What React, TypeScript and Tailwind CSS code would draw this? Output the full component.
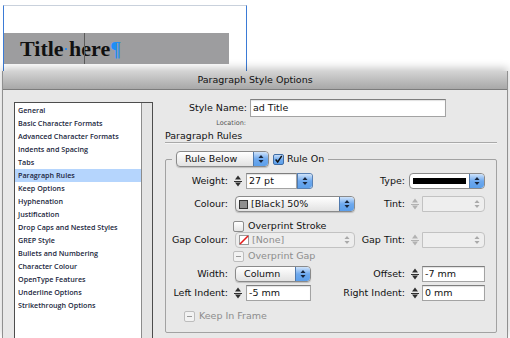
import React from "react";

const sections = [
  "General",
  "Basic Character Formats",
  "Advanced Character Formats",
  "Indents and Spacing",
  "Tabs",
  "Paragraph Rules",
  "Keep Options",
  "Hyphenation",
  "Justification",
  "Drop Caps and Nested Styles",
  "GREP Style",
  "Bullets and Numbering",
  "Character Colour",
  "OpenType Features",
  "Underline Options",
  "Strikethrough Options",
];

function Arrows({ dim }: { dim?: boolean }) {
  const c = dim ? "#a9a9a9" : "#17243a";
  return (
    <svg width="6" height="10" viewBox="0 0 6 10">
      <path d="M3 1 L5.5 4 H0.5 Z" fill={c} />
      <path d="M3 9 L5.5 6 H0.5 Z" fill={c} />
    </svg>
  );
}

function Stepper({ dim }: { dim?: boolean }) {
  const c = dim ? "#b2b2b2" : "#2e2e2e";
  return (
    <svg width="12" height="16" viewBox="0 0 12 16" className="shrink-0">
      <path d="M6 2.5 L9 6.5 H3 Z" fill={c} />
      <path d="M2 8.5 H10" stroke={c} strokeWidth="1" />
      <path d="M6 13.5 L9 9.5 H3 Z" fill={c} />
    </svg>
  );
}

function BlueButton() {
  return (
    <div className="w-[15px] h-full shrink-0 flex items-center justify-center rounded-r-[3px] border-l border-[#4f79ad] bg-gradient-to-b from-[#cfe3fa] via-[#6ea9ee] to-[#5c9fea]">
      <Arrows />
    </div>
  );
}

function PopUp({ className, children }: { className: string; children: React.ReactNode }) {
  return (
    <div
      className={`h-[16px] flex items-center rounded-[4px] border border-[#8a8a8a] bg-gradient-to-b from-white to-[#e2e2e2] shadow-[0_1px_1px_rgba(0,0,0,0.18)] overflow-hidden ${className}`}
    >
      <div className="flex-1 flex items-center pl-[8px] text-[9.5px] text-[#111] whitespace-nowrap">{children}</div>
      <BlueButton />
    </div>
  );
}

function DimPopUp({ className, children }: { className: string; children?: React.ReactNode }) {
  return (
    <div
      className={`h-[16px] flex items-center rounded-[4px] border border-[#c2c2c2] bg-[#ededed] overflow-hidden ${className}`}
    >
      <div className="flex-1 flex items-center pl-[8px] text-[9.5px] text-[#8d8d8d] whitespace-nowrap">{children}</div>
      <div className="w-[15px] flex justify-center">
        <Arrows dim />
      </div>
    </div>
  );
}

function Field({ className, children }: { className: string; children?: React.ReactNode }) {
  return (
    <div
      className={`h-[16px] flex items-center bg-white border border-[#a3a3a3] border-t-[#7e7e7e] shadow-[inset_0_1px_1px_rgba(0,0,0,0.12)] pl-[2px] text-[9.5px] text-[#111] whitespace-nowrap ${className}`}
    >
      {children}
    </div>
  );
}

function Check({ state }: { state: "on" | "off" | "mixed" }) {
  if (state === "on")
    return (
      <div className="w-[11px] h-[11px] rounded-[2px] border border-[#3f6da6] bg-gradient-to-b from-[#c6ddf8] via-[#72acee] to-[#5c9fea] flex items-center justify-center">
        <svg width="11" height="11" viewBox="0 0 11 11">
          <path d="M2 5.5 L4.5 8.5 L9.5 1" stroke="#111" strokeWidth="1.8" fill="none" />
        </svg>
      </div>
    );
  return (
    <div
      className={`w-[11px] h-[11px] rounded-[2px] border flex items-center justify-center ${
        state === "mixed" ? "border-[#bdbdbd] bg-[#f2f2f2]" : "border-[#8c8c8c] bg-gradient-to-b from-white to-[#e4e4e4]"
      }`}
    >
      {state === "mixed" && <div className="w-[5px] h-[1px] bg-[#9a9a9a]" />}
    </div>
  );
}

const label = "w-[62px] shrink-0 text-right text-[9.5px] text-[#111] whitespace-nowrap";
const rlabel = "ml-auto text-right text-[9.5px] whitespace-nowrap";

export default function App() {
  return (
    <div className="w-[510px] h-[338px] overflow-hidden bg-white font-['DejaVu_Sans',sans-serif]">
      {/* Document behind the dialog */}
      <div className="h-[71px] pt-[5px] pl-[3px]">
        <div className="w-[244px] h-[66px] border-x border-t border-x-[#3b7bd6] border-t-[#c9d1dc] pt-[27px]">
          <div className="relative w-[225px] h-[31px] bg-[#9d9d9f] flex items-center pl-[16px]">
            <span className="font-['Liberation_Serif',serif] font-bold text-[22px] leading-none text-[#111]">
              Title
            </span>
            <span className="w-[5.5px] flex justify-center">
              <span className="w-[2px] h-[2px] bg-[#2b8cf0]" />
            </span>
            <span className="font-['Liberation_Serif',serif] font-bold text-[22px] leading-none text-[#111]">here</span>
            <span className="font-['Liberation_Serif',serif] font-bold text-[20px] leading-none text-[#1e8ef5]">¶</span>
            <span className="absolute left-[80px] top-0 bottom-0 w-px bg-[#5a5a5a]" />
          </div>
        </div>
      </div>

      {/* Dialog */}
      <div className="mx-[2px] h-[267px] border-x border-[#909090] bg-[#e8e8e8] shadow-[0_-3px_8px_rgba(0,0,0,0.22)]">
        <div className="h-[19px] flex items-center justify-center border-b border-[#7c7c7c] bg-gradient-to-b from-[#d4d4d4] to-[#a8a8a8] text-[9.5px] text-[#111]">
          Paragraph Style Options
        </div>

        <div className="flex">
          {/* Section list */}
          <div className="ml-[11px] mt-[12px] w-[139px] h-[240px] border border-[#4d4d4d] flex">
            <div className="flex-1 bg-white pt-[1px]">
              {sections.map((s) => (
                <div
                  key={s}
                  className={`h-[13px] flex items-center pl-[3px] font-['Open_Sans',sans-serif] font-semibold text-[7.2px] text-[#1b1f3d] whitespace-nowrap ${
                    s === "Paragraph Rules" ? "bg-[#b5d5fd]" : ""
                  }`}
                >
                  {s}
                </div>
              ))}
            </div>
            <div className="w-[11px] bg-[#e4e4e4] border-l border-[#8c8c8c]" />
          </div>

          {/* Right panel */}
          <div className="ml-[12px] mt-[9px] w-[332px]">
            <div className="flex items-center h-[18px]">
              <div className="w-[82px] text-right text-[9.5px] text-[#111]">Style Name:</div>
              <div className="ml-[3px] w-[196px] h-[18px] flex items-center bg-white border border-[#a3a3a3] border-t-[#7e7e7e] shadow-[inset_0_1px_1px_rgba(0,0,0,0.12)] pl-[2px] text-[9.5px] text-[#111]">
                ad Title
              </div>
            </div>
            <div className="mt-[3px] h-[8px] flex items-center">
              <div className="w-[81px] text-right text-[6.5px] text-[#555]">Location:</div>
            </div>
            <div className="mt-[2px] h-[12px] flex items-center text-[9.5px] text-[#111]">Paragraph Rules</div>
            <div className="h-[2px] border-t border-[#a9a9a9] border-b border-b-[#f6f6f6]" />

            <fieldset className="mt-[7px] w-[332px] h-[182px] border border-[#a2a2a2] rounded-[2px]">
              <legend className="ml-[6px] px-[4px] h-[16px]">
                <div className="flex items-center h-[16px]">
                  <PopUp className="w-[93px]">Rule Below</PopUp>
                  <div className="ml-[4px]">
                    <Check state="on" />
                  </div>
                  <span className="ml-[3px] text-[9.5px] text-[#111]">Rule On</span>
                </div>
              </legend>

              {/* Weight / Type */}
              <div className="mt-[6px] h-[16px] flex items-center pr-[11px]">
                <div className={label}>Weight:</div>
                <div className="ml-[4px] flex items-center">
                  <Stepper />
                  <div className="ml-[2px] flex h-[16px] rounded-r-[3px] overflow-hidden">
                    <Field className="w-[51px]">27 pt</Field>
                    <div className="h-[16px] border border-l-0 border-[#5a82b4] rounded-r-[3px] overflow-hidden">
                      <BlueButton />
                    </div>
                  </div>
                </div>
                <div className={`${rlabel} text-[#111]`}>Type:</div>
                <div className="ml-[4px] w-[76px] h-[16px] flex items-center rounded-[4px] border border-[#8a8a8a] bg-white overflow-hidden">
                  <div className="flex-1 px-[3px]">
                    <div className="h-[6px] bg-black" />
                  </div>
                  <BlueButton />
                </div>
              </div>

              {/* Colour / Tint */}
              <div className="mt-[7px] h-[16px] flex items-center pr-[11px]">
                <div className={label}>Colour:</div>
                <PopUp className="ml-[7px] w-[120px]">
                  <span className="w-[9px] h-[9px] border border-[#333] bg-[#8e8e8e] mr-[3px] -ml-[5px]" />
                  [Black] 50%
                </PopUp>
                <div className={`${rlabel} text-[#111]`}>Tint:</div>
                <div className="ml-[4px] w-[76px] flex items-center">
                  <Stepper dim />
                  <DimPopUp className="ml-[1px] flex-1 rounded-l-none bg-[#eeeeee]" />
                </div>
              </div>

              {/* Overprint Stroke */}
              <div className="mt-[8px] h-[12px] flex items-center pl-[67px]">
                <Check state="off" />
                <span className="ml-[4px] text-[9.5px] text-[#111]">Overprint Stroke</span>
              </div>

              {/* Gap Colour / Gap Tint */}
              <div className="h-[16px] flex items-center pr-[11px]">
                <div className={label}>Gap Colour:</div>
                <DimPopUp className="ml-[7px] w-[120px]">
                  <svg width="10" height="10" viewBox="0 0 10 10" className="-ml-[5px] mr-[3px]">
                    <rect x="0.5" y="0.5" width="9" height="9" fill="#fff" stroke="#9a9a9a" />
                    <path d="M1 9 L9 1" stroke="#e41b1b" strokeWidth="1.6" />
                  </svg>
                  [None]
                </DimPopUp>
                <div className={`${rlabel} text-[#111]`}>Gap Tint:</div>
                <div className="ml-[4px] w-[76px] flex items-center">
                  <Stepper dim />
                  <DimPopUp className="ml-[1px] flex-1 rounded-l-none bg-[#eeeeee]" />
                </div>
              </div>

              {/* Overprint Gap */}
              <div className="mt-[2px] h-[12px] flex items-center pl-[67px]">
                <Check state="mixed" />
                <span className="ml-[4px] text-[9.5px] text-[#8d8d8d]">Overprint Gap</span>
              </div>

              {/* Width / Offset */}
              <div className="mt-[4px] h-[16px] flex items-center pr-[11px]">
                <div className={label}>Width:</div>
                <PopUp className="ml-[7px] w-[76px]">Column</PopUp>
                <div className={`${rlabel} text-[#111]`}>Offset:</div>
                <div className="ml-[4px] w-[76px] flex items-center">
                  <Stepper />
                  <Field className="ml-[1px] flex-1">-7 mm</Field>
                </div>
              </div>

              {/* Left / Right Indent */}
              <div className="mt-[3px] h-[16px] flex items-center pr-[11px]">
                <div className={label}>Left Indent:</div>
                <div className="ml-[4px] flex items-center">
                  <Stepper />
                  <Field className="ml-[2px] w-[65px]">-5 mm</Field>
                </div>
                <div className={`${rlabel} text-[#111]`}>Right Indent:</div>
                <div className="ml-[4px] w-[76px] flex items-center">
                  <Stepper />
                  <Field className="ml-[1px] flex-1">0 mm</Field>
                </div>
              </div>

              {/* Keep In Frame */}
              <div className="mt-[9px] h-[12px] flex items-center pl-[18px]">
                <Check state="mixed" />
                <span className="ml-[4px] text-[9.5px] text-[#8d8d8d]">Keep In Frame</span>
              </div>
            </fieldset>
          </div>
        </div>
      </div>
    </div>
  );
}
